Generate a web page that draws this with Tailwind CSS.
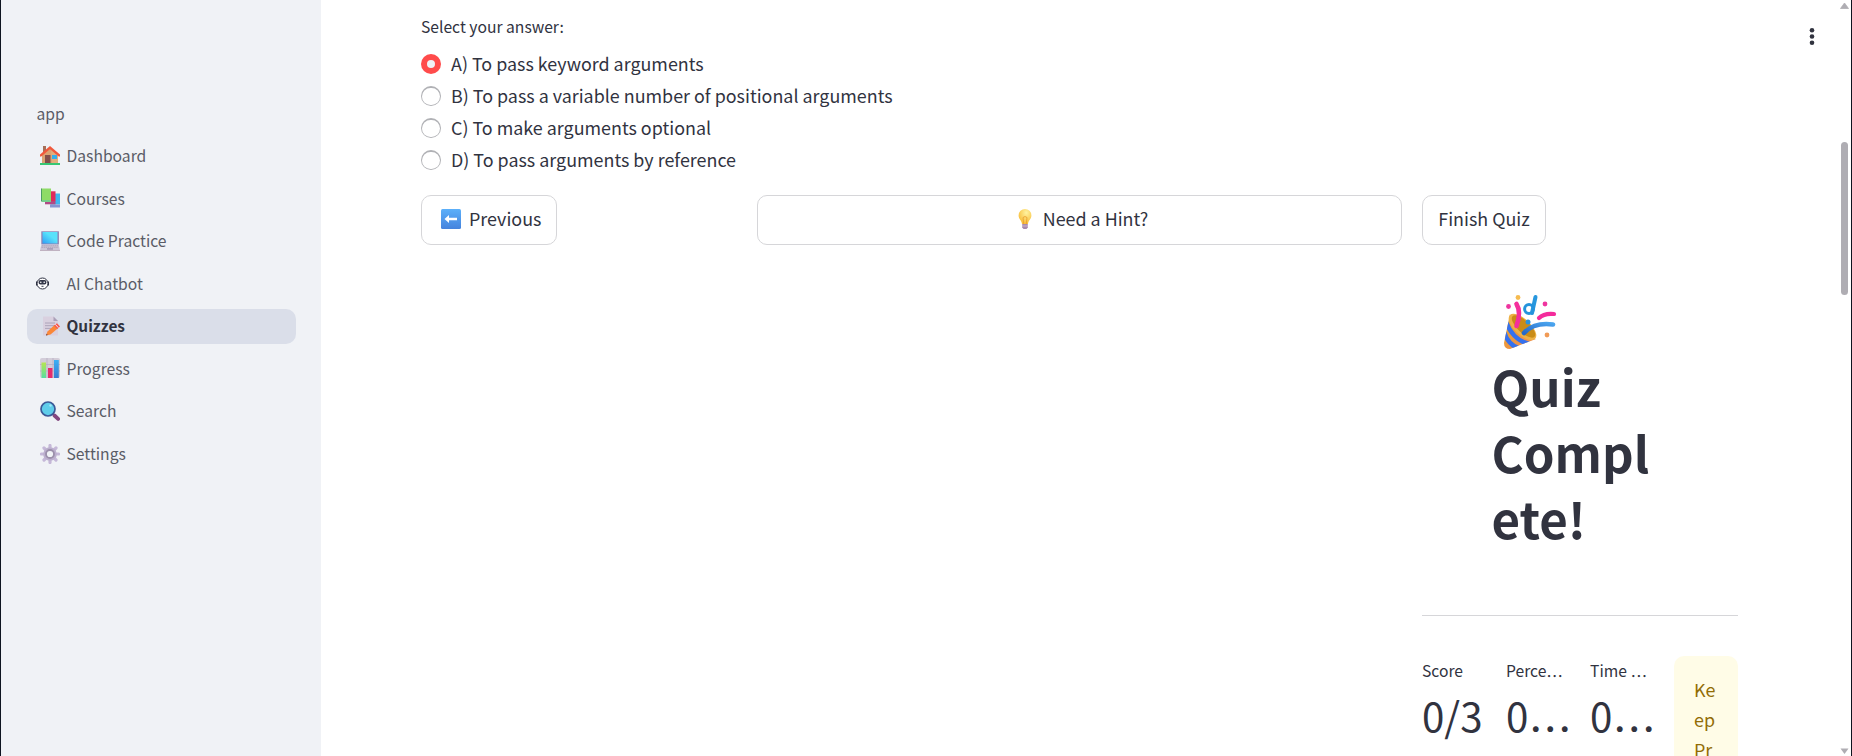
<!DOCTYPE html>
<html lang="en">
<head>
<meta charset="utf-8">
<title>Quizzes</title>
<script src="https://cdn.jsdelivr.net/npm/@tailwindcss/browser@4"></script>
</head>
<body class="h-[756px] overflow-hidden bg-white font-['Noto_Sans_CJK_SC',sans-serif] text-[#31333f]">
<div class="relative flex h-[756px] w-[1852px] overflow-hidden border-x border-[#0e1420]">
  <aside class="w-80 shrink-0 bg-[#f0f2f6] pt-[97px] pr-[25px] pl-[26px]">
    <nav class="flex flex-col gap-[7.4px] text-[15.67px] leading-[32px] text-[#5a5c66]">
      <a class="flex h-[35px] items-center pl-[9.500px]"><span class="pb-[1px]">app</span></a>
      <a class="flex h-[35px] items-center pl-[13px]">
        <svg class="mr-[6.500px] mb-[2px] size-5 shrink-0" viewBox="0 0 20 20"><path d="M3 0h3v6H3z" fill="#a66f58"/><path d="M2 9 10 2l8 7v9H2z" fill="#d9a373"/><path d="M11 3l7 6v9h-6z" fill="#e2ae7c"/><path d="M.8 9.4 10 1.6l9.2 7.8" fill="none" stroke="#f0583c" stroke-width="2.4" stroke-linecap="round"/><path d="M5 9h5.5v9H5z" fill="#824e4b"/><path d="M12 9h5v4h-5z" fill="#35aeea"/><path d="M0 17h20v2H0z" fill="#36c774"/></svg>
        <span class="pb-[1px]">Dashboard</span></a>
      <a class="flex h-[35px] items-center pl-[13px]">
        <svg class="mr-[6.500px] mb-[2px] size-5 shrink-0" viewBox="0 0 20 20"><path d="M10.500 5.500h10v11h-10z" fill="#3fb8f0"/><path d="M10 16.500h10.500v3H10z" fill="#8594d2"/><path d="M6 3.300h9.500v10.500H6z" fill="#e02a5c"/><path d="M5 13.800h10.500v2.500H5z" fill="#b04a86"/><path d="M1.500 .5h9.500v12H1.500z" fill="#8edb66"/><path d="M1 .5h1v13H1z" fill="#4d9e63"/><path d="M2 12h9v2H2z" fill="#77cf8e"/></svg>
        <span class="pb-[1px]">Courses</span></a>
      <a class="flex h-[35px] items-center pl-[13px]">
        <svg class="mr-[6.500px] mb-[2px] size-5 shrink-0" viewBox="0 0 20 20"><defs><linearGradient id="sc" x1="0" y1="1" x2="1" y2="0"><stop stop-color="#2f9df5"/><stop offset=".6" stop-color="#58e2fb"/></linearGradient></defs><path d="M1.300 .3h17.600v13.200H1.300z" fill="#8b82b4"/><path d="M2.500 1h15v11.500h-15z" fill="url(#sc)"/><path d="M1.200 14h17.600L20 19.500H0z" fill="#cbc5d6"/><path d="M2 14.800h16M1.500 16.300h17" stroke="#aaa2b8" stroke-width=".9" stroke-dasharray="1.500 .6"/><path d="M7 17h6v1.800H7z" fill="#a99fba"/><path d="M0 19h20v.8H0z" fill="#b8a8b8"/></svg>
        <span class="pb-[1px]">Code Practice</span></a>
      <a class="flex h-[35px] items-center pl-[9px]">
        <svg class="mr-[17.500px] mb-[1px] h-[13px] w-[13px] shrink-0" viewBox="0 0 13 13"><circle cx="6.500" cy="6.500" r="5.500" fill="#fff" stroke="#2d3142" stroke-width="1"/><path d="M.6 4.500v4M12.400 4.500v4" stroke="#2d3142" stroke-width="1.200"/><rect x="2.600" y="2.900" width="7.800" height="4.600" rx="1.800" fill="#34384a"/><circle cx="4.800" cy="5.300" r=".8" fill="#fff"/><circle cx="8.200" cy="5.300" r=".8" fill="#fff"/><path d="M5.500 9.300h2" stroke="#34384a"/></svg>
        <span class="pb-[1px]">AI Chatbot</span></a>
      <a class="flex h-[35px] items-center rounded-[10px] bg-[#dadee9] pl-[13px] text-[15.400px] font-bold text-[#31333f]">
        <svg class="mr-[6.500px] mb-[1px] size-5 shrink-0" viewBox="0 0 20 20"><path d="M3 .5h10.500L18 5v14.500H3z" fill="#d9d0df"/><path d="M13.500 .5 18 5h-4.500z" fill="#aaa0b8"/><path d="M5 7h10M5 9.700h10M5 12.400h6" stroke="#a79eb5" stroke-width=".9"/><path d="M6 19.500 7.500 15.500l7-6.500 3.200 3.400-7.200 6z" fill="#fa8738"/><path d="m14 9.500 3-2.300 3 3.200-2.700 2.500z" fill="#f9554d"/><path d="m15.300 8.300 3 3.400" stroke="#eee3e9" stroke-width="1"/><path d="m6 19.500.6-1.800 1.200 1.200z" fill="#59404c"/></svg>
        <span class="pb-[2px]">Quizzes</span></a>
      <a class="flex h-[35px] items-center pl-[13px]">
        <svg class="mr-[6.500px] mb-[1px] size-5 shrink-0" viewBox="0 0 20 20"><defs><linearGradient id="g1" x2="0" y2="1"><stop stop-color="#b7e651"/><stop offset="1" stop-color="#58dda1"/></linearGradient><linearGradient id="g2" x2="0" y2="1"><stop stop-color="#3eb0f5"/><stop offset="1" stop-color="#397bd0"/></linearGradient></defs><rect width="20" height="20" rx="2" fill="#d3cdd9"/><path d="M7 0v20M13 0v20M0 6.500h20M0 13h20" stroke="#b5acbf" stroke-width=".7"/><path d="M1.500 4.500h4.500V20H1.500z" fill="url(#g1)"/><path d="M8 10h4.500v10H8z" fill="#e72c6c"/><path d="M14 2h4.800v18H14z" fill="url(#g2)"/></svg>
        <span>Progress</span></a>
      <a class="flex h-[35px] items-center pl-[13px]">
        <svg class="mr-[6.500px] size-5 shrink-0" viewBox="0 0 20 20"><path d="m12.500 12.500 2 2" stroke="#50548a" stroke-width="2"/><path d="m14.500 14.500 3.600 3.400" stroke="#84477f" stroke-width="3.800" stroke-linecap="round"/><circle cx="8" cy="8" r="7" fill="#5fcdea" stroke="#3b5997" stroke-width="1.700"/><circle cx="10.500" cy="4.500" r="1.200" fill="#a4e8f7"/></svg>
        <span class="pb-[1px]">Search</span></a>
      <a class="flex h-[35px] items-center pl-[13px]">
        <svg class="mr-[6.500px] size-5 shrink-0" viewBox="0 0 20 20"><path d="M10 1.500v17M1.500 10h17M4 4l12 12M16 4 4 16" stroke="#c5b8d8" stroke-width="3.200" stroke-linecap="round"/><circle cx="10" cy="10" r="6.800" fill="#bcb0ce"/><circle cx="10" cy="10" r="4" fill="#f0f2f6" stroke="#9b8fab" stroke-width="1.800"/></svg>
        <span>Settings</span></a>
    </nav>
  </aside>

  <main class="w-[1417px] shrink-0 pl-[100px]">
    <p class="mt-[13px] h-[29px] text-[15.67px] leading-[28px]">Select your answer:</p>
    <div class="mt-[6px] flex flex-col text-[17.9px] leading-[30px]">
      <label class="flex h-8 items-center gap-[10px]"><span class="flex size-5 items-center justify-center rounded-full bg-[#ff4b4b]"><span class="size-2 rounded-full bg-[#f0f2f6]"></span></span><span class="pb-[2px]">A) To pass keyword arguments</span></label>
      <label class="flex h-8 items-center gap-[10px]"><span class="size-5 rounded-full bg-[#b0b1b5] p-px pt-[2px]"><span class="block h-[17px] w-[18px] rounded-full bg-white"></span></span><span class="pb-[2px]">B) To pass a variable number of positional arguments</span></label>
      <label class="flex h-8 items-center gap-[10px]"><span class="size-5 rounded-full bg-[#b0b1b5] p-px pt-[2px]"><span class="block h-[17px] w-[18px] rounded-full bg-white"></span></span><span class="pb-[2px]">C) To make arguments optional</span></label>
      <label class="flex h-8 items-center gap-[10px]"><span class="size-5 rounded-full bg-[#b0b1b5] p-px pt-[2px]"><span class="block h-[17px] w-[18px] rounded-full bg-white"></span></span><span class="pb-[2px]">D) To pass arguments by reference</span></label>
    </div>

    <div class="mt-[19px] grid grid-cols-[316px_645px_316px] gap-5 text-[17.9px] leading-[30px]">
      <div>
        <button class="flex h-[50px] w-[136px] items-center rounded-[10px] border border-[#d6d6d9] pl-[19px]">
          <svg class="mr-[8px] mb-[2px] size-5" viewBox="0 0 20 20"><defs><linearGradient id="ar" x2="0" y2="1"><stop stop-color="#5cb0fa"/><stop offset="1" stop-color="#4583dd"/></linearGradient></defs><rect width="20" height="20" rx="1.500" fill="url(#ar)"/><path d="M3.500 10 8 6v2.800h8v2.400H8V14z" fill="#fff"/></svg>
          <span class="pb-[4px]">Previous</span></button>
      </div>
      <div>
        <button class="flex h-[50px] w-full items-center justify-center rounded-[10px] border border-[#d6d6d9]">
          <svg class="mr-[8px] mb-[2px] ml-[4px] size-5" viewBox="0 0 20 20"><defs><radialGradient id="bl" cx=".6" cy=".25" r=".7"><stop stop-color="#fff3a0"/><stop offset="1" stop-color="#f8bf3d"/></radialGradient></defs><path d="M10 0a6.400 6.400 0 0 1 6.400 6.400c0 3.800-3 4.600-3.400 8.600H7c-.4-4-3.400-4.800-3.400-8.600A6.400 6.400 0 0 1 10 0z" fill="url(#bl)"/><path d="M8.700 15 8 8.500q2-2 4 0L11.300 15" fill="none" stroke="#e99a2b" stroke-width=".8"/><path d="M7.200 15h5.600v3.500l-1.300 1.500h-3l-1.300-1.500z" fill="#a78aae"/><path d="M7 17h6" stroke="#d5bfd2" stroke-width=".8"/></svg>
          <span class="pb-[4px]">Need a Hint?</span></button>
      </div>
      <div>
        <button class="flex h-[50px] w-[124px] items-center justify-center rounded-[10px] border border-[#d6d6d9]"><span class="pb-[4px]">Finish Quiz</span></button>

        <div class="mt-[49px] pl-[69.500px]">
          <svg class="ml-[10px] h-[56px] w-[56px]" viewBox="0 0 56 56"><defs><linearGradient id="cone" x2="1" y2="1"><stop stop-color="#e8a52a"/><stop offset="1" stop-color="#f08a55"/></linearGradient><linearGradient id="st" x1="0" y1="1" x2="1" y2="0"><stop stop-color="#2468c8"/><stop offset="1" stop-color="#4aa4ee"/></linearGradient><clipPath id="cc"><path d="M8 20C12 34 22 44 34 45L8 55Q2 55 2 49z"/></clipPath></defs>
            <path d="M8 20C12 34 22 44 34 45L8 55Q2 55 2 49z" fill="url(#cone)"/>
            <g clip-path="url(#cc)" fill="none" stroke="#3571ee" stroke-width="4.500"><path d="M4 28q7 18 23 22"/><path d="M2 38q4 13 16 17"/></g>
            <ellipse cx="20.500" cy="33" rx="8" ry="17.300" transform="rotate(-47 20.500 33)" fill="#edb145"/><ellipse cx="21.500" cy="32.500" rx="6" ry="15" transform="rotate(-47 21.500 32.500)" fill="#c98c18"/>
            <path d="M14.500 10q5 8 0 22" fill="none" stroke="#f52f9c" stroke-width="4.600" stroke-linecap="round"/>
            <path d="M22 39q10-11 29-8.500" fill="none" stroke="url(#st)" stroke-width="4.600" stroke-linecap="round"/>
            <path d="M37 24q5-5 15-4" fill="none" stroke="#f42b9b" stroke-width="4.200" stroke-linecap="round"/>
            <path d="M33.500 3Q32 10 30 19" fill="none" stroke="#2797de" stroke-width="4" stroke-linecap="round"/><circle cx="27" cy="15" r="4.400" fill="none" stroke="#2593dc" stroke-width="3"/>
            <g fill="#ef349f"><circle cx="6.500" cy="12.500" r="2.400"/><circle cx="43" cy="10" r="2.400"/></g><circle cx="16" cy="3.500" r="2.400" fill="#f6bb50"/><circle cx="45" cy="41" r="2.400" fill="#f19b56"/><circle cx="26" cy="28" r="2.500" fill="#2993dd"/></svg>
          <h1 class="mt-[3px] text-[49.200px] leading-[66px] font-bold">Quiz<br>Compl<br>ete!</h1>
        </div>
        <hr class="mt-[64px] border-[#d6d6d9]">
        <div class="mt-[40px] grid grid-cols-4 gap-5 whitespace-nowrap">
          <div class="pt-px"><div class="h-[30px] text-[15.67px] leading-[28px]">Score</div><div class="text-[40.300px] leading-[56px]">0/3</div></div>
          <div class="pt-px"><div class="h-[30px] text-[15.67px] leading-[28px]">Perce<span class="inline-block translate-y-[.33em] text-[16.800px] leading-none">…</span></div><div class="text-[40.300px] leading-[56px]">0<span class="inline-block translate-y-[.33em] text-[43.500px] leading-none">…</span></div></div>
          <div class="pt-px"><div class="h-[30px] text-[15.67px] leading-[28px]">Time <span class="inline-block translate-y-[.33em] text-[16.800px] leading-none">…</span></div><div class="text-[40.300px] leading-[56px]">0<span class="inline-block translate-y-[.33em] text-[43.500px] leading-none">…</span></div></div>
          <div class="h-[140px] rounded-[10px] bg-[#fffce7] pt-[18px] pl-5 text-[17.900px] leading-[30px] text-[#926c05]">Ke<br>ep<br>Pr</div>
        </div>
      </div>
    </div>
  </main>

  <svg class="absolute top-[26px] right-[33.500px] h-5 w-[12px]" viewBox="0 0 12 20" fill="#31333f"><circle cx="6" cy="4.300" r="2.300"/><circle cx="6" cy="10.500" r="2.300"/><circle cx="6" cy="16.800" r="2.300"/></svg>
  <div class="absolute top-0 right-px flex h-full w-[12px] flex-col items-center text-[#afadb3]">
    <svg class="mt-[3px] h-[6px] w-[9px] shrink-0" viewBox="0 0 9 6"><path d="M4.500 0 8.500 5.500h-8z" fill="currentColor" stroke="currentColor" stroke-linejoin="round" stroke-width=".8"/></svg>
    <div class="mt-[133px] h-[153px] w-[7px] shrink-0 rounded-full bg-current"></div>
    <svg class="mt-auto mb-[2px] h-[6px] w-[9px] shrink-0" viewBox="0 0 9 6"><path d="M.5 .5h8L4.500 6z" fill="currentColor"/></svg>
  </div>
</div>
</body>
</html>
